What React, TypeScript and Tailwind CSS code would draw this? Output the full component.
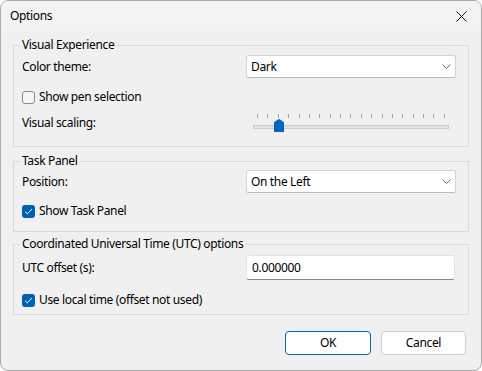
import React from "react";

const font = { fontFamily: '"Noto Sans", "Segoe UI", sans-serif' };

function Chevron() {
  return (
    <svg width="9" height="5" viewBox="0 0 9 5" className="block">
      <path d="M0.5 0.5 L4.5 4.5 L8.5 0.5" fill="none" stroke="#6a6a6a" strokeWidth="1" />
    </svg>
  );
}

function Select({ value }: { value: string }) {
  return (
    <div className="flex h-[23px] w-[210px] items-center justify-between rounded-[3px] border border-[#d3d3d3] border-b-[#bcbcbc] bg-white pl-[4px] pr-[4px]">
      <span className="text-[12px] leading-[16px] text-black">{value}</span>
      <Chevron />
    </div>
  );
}

function Checkbox({ checked, label }: { checked: boolean; label: string }) {
  return (
    <div className="flex items-center">
      {checked ? (
        <div className="flex h-[13px] w-[13px] items-center justify-center rounded-[3px] bg-[#005fb8]">
          <svg width="9" height="7" viewBox="0 0 9 7">
            <path d="M1 3.6 L3.3 5.8 L8 1" fill="none" stroke="white" strokeWidth="1" />
          </svg>
        </div>
      ) : (
        <div className="h-[13px] w-[13px] rounded-[3px] border border-[#8a8a8a] bg-[#f6f6f6]" />
      )}
      <span className="ml-[4px] text-[12px] leading-[16px] text-black">{label}</span>
    </div>
  );
}

function Slider() {
  const ticks = Array.from({ length: 19 }, (_, i) => i);
  return (
    <div className="relative h-[18px] w-[210px]">
      <div className="absolute left-[11px] top-0 flex w-[188px] justify-between">
        {ticks.map((t) => (
          <div key={t} className="h-[4px] w-[1px] bg-[#a8a8a8]" />
        ))}
      </div>
      <div className="absolute left-[7px] top-[11px] h-[4px] w-[196px] border border-[#cdcdcd] bg-[#e3e3e3]" />
      <svg className="absolute left-[28px] top-[5px]" width="10" height="13" viewBox="0 0 10 13">
        <path d="M0 4 Q0 3 1 2.5 L4 0.4 Q5 -0.2 6 0.4 L9 2.5 Q10 3 10 4 L10 13 L0 13 Z" fill="#0067c0" />
      </svg>
    </div>
  );
}

function Group({ title, children, className }: { title: string; children: React.ReactNode; className?: string }) {
  return (
    <fieldset className={"border border-[#dadada] pl-[8px] pr-[12px] " + (className || "")}>
      <legend className="-ml-[2px] px-[2px] text-[12px] leading-[16px] text-black">{title}</legend>
      {children}
    </fieldset>
  );
}

function Row({ label, children, className }: { label: string; children: React.ReactNode; className?: string }) {
  return (
    <div className={"flex items-center " + (className || "")}>
      <div className="w-[224px] text-[12px] leading-[16px] text-black">{label}</div>
      {children}
    </div>
  );
}

export default function App() {
  return (
    <div style={font} className="h-[371px] w-[482px] bg-white tracking-[-0.35px]">
      <div className="flex h-[371px] w-[482px] flex-col overflow-hidden rounded-[8px] border border-[#a9a9a9] bg-[#f0f0f0]">
        <div className="flex h-[30px] items-center justify-between bg-[#f3f3f3] pl-[9px] pr-[14px]">
          <span className="text-[12px] leading-[16px] text-black">Options</span>
          <svg width="11" height="11" viewBox="0 0 11 11">
            <path d="M0.5 0.5 L10.5 10.5 M10.5 0.5 L0.5 10.5" stroke="#1a1a1a" strokeWidth="1" />
          </svg>
        </div>
        <div className="flex flex-col px-[12px] pt-[6px]">
          <Group title="Visual Experience" className="pb-[14px]">
            <Row label="Color theme:" className="mt-[2px]">
              <Select value="Dark" />
            </Row>
            <div className="mt-[9px] flex h-[20px] items-center">
              <Checkbox checked={false} label="Show pen selection" />
            </div>
            <Row label="Visual scaling:" className="mt-[7px]">
              <Slider />
            </Row>
          </Group>
          <Group title="Task Panel" className="mt-[6px] pb-[10px]">
            <Row label="Position:" className="mt-[1px]">
              <Select value="On the Left" />
            </Row>
            <div className="mt-[8px] flex h-[20px] items-center">
              <Checkbox checked={true} label="Show Task Panel" />
            </div>
          </Group>
          <Group title="Coordinated Universal Time (UTC) options" className="mt-[4px] pb-[6px]">
            <Row label="UTC offset (s):" className="mt-[3px]">
              <div className="flex h-[25px] w-[209px] items-center rounded-[3px] border border-[#e3e3e3] border-b-[#868686] bg-white pl-[5px]">
                <span className="text-[12px] leading-[16px] text-black">0.000000</span>
              </div>
            </Row>
            <div className="mt-[12px] flex h-[16px] items-center">
              <Checkbox checked={true} label="Use local time (offset not used)" />
            </div>
          </Group>
          <div className="mt-[16px] flex justify-end gap-[10px] pr-[3px]">
            <button className="flex h-[24px] w-[86px] items-center justify-center rounded-[4px] border border-[#0067c0] bg-[#fdfdfd] text-[12px] leading-[16px] text-black">
              OK
            </button>
            <button className="flex h-[24px] w-[85px] items-center justify-center rounded-[4px] border border-[#d0d0d0] bg-[#fdfdfd] text-[12px] leading-[16px] text-black">
              Cancel
            </button>
          </div>
        </div>
      </div>
    </div>
  );
}
